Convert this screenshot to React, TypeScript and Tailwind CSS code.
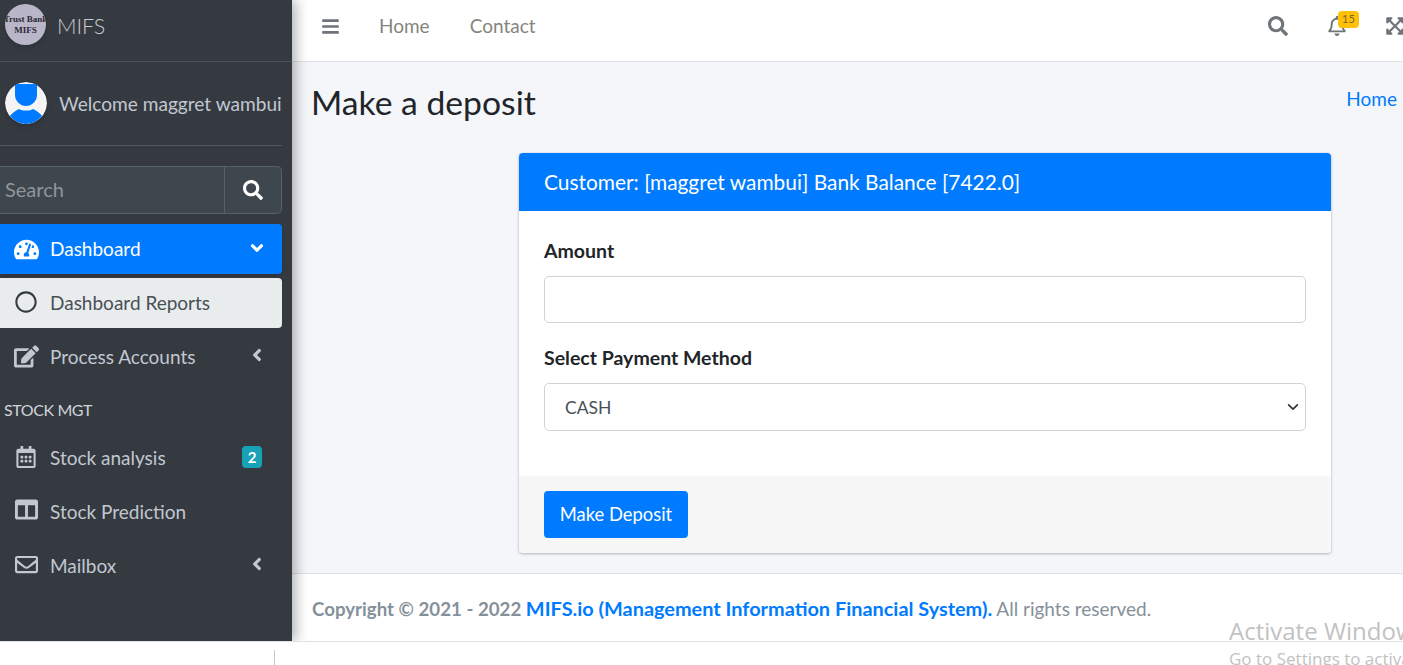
import React from 'react';
import {
  FaAngleDown,
  FaAngleLeft,
  FaBars,
  FaColumns,
  FaEdit,
  FaExpandArrowsAlt,
  FaRegBell,
  FaRegCalendarAlt,
  FaRegCircle,
  FaRegEnvelope,
  FaSearch,
  FaTachometerAlt,
} from 'react-icons/fa';

const NavRow = ({ icon, label, right }: { icon: React.ReactNode; label: string; right?: React.ReactNode }) => (
  <a className="flex h-[50px] items-center rounded-[4px] text-[#c2c7d0]">
    <span className="flex w-[50px] shrink-0 justify-center pl-[2px]">{icon}</span>
    <span>{label}</span>
    <span className="ml-auto">{right}</span>
  </a>
);

const App: React.FC = () => {
  return (
    <div className="relative h-[665px] w-[1403px] overflow-hidden bg-white font-['Lato',sans-serif] text-[19px] text-[#212529]">
      <div className="flex h-[642px] overflow-hidden border-b border-[#dee2e6]">
        <aside className="z-10 flex w-[292px] shrink-0 flex-col bg-[#343a40] shadow-[4px_0_12px_rgba(0,0,0,0.3)]">
          <div className="flex h-[62px] shrink-0 items-start border-b border-[#4b545c] pl-[5px] pt-[4px]">
            <div className="flex h-[41px] w-[41px] flex-col items-center justify-center overflow-hidden rounded-full bg-[#b9b6c9] font-['Liberation_Serif',serif] text-[9px] font-bold leading-[11px] text-[#2b2b33] shadow-md">
              <span className="whitespace-nowrap">Trust Bank</span>
              <span>MIFS</span>
            </div>
            <span className="ml-[11px] mt-[7px] text-[21.5px] font-light leading-[30px] text-[#c8ccd2]">MIFS</span>
          </div>

          <div className="mr-[10px] flex h-[84px] shrink-0 items-center border-b border-[#4f5962] pl-[5px]">
            <svg viewBox="0 0 42 42" className="mb-[2px] h-[42px] w-[42px] shrink-0 rounded-full shadow-md">
              <circle cx="21" cy="21" r="21" fill="#f4f4f4" />
              <path d="M10 2h22v11c0 6-5 11-11 11S10 19 10 13z" fill="#007bff" />
              <path d="M5 34c2-3 5-5 9-7 3 2 11 2 14 0 4 2 7 4 9 7-4 5-10 8-16 8S9 39 5 34z" fill="#007bff" />
            </svg>
            <span className="ml-[12px] whitespace-nowrap pt-[2px] text-[19.1px] text-[#c2c7d0]">Welcome maggret wambui</span>
          </div>

          <div className="mr-[10px] mt-[20px] flex h-[48px] shrink-0 rounded-r-[5px] border border-l-0 border-[#56606a] bg-[#3f474e]">
            <div className="flex flex-1 items-center pb-[2px] pl-[5px] text-[20px] text-[#8f969c]">Search</div>
            <div className="flex w-[57px] items-center justify-center border-l border-[#56606a]">
              <FaSearch className="text-[20px] text-white" />
            </div>
          </div>

          <nav className="mr-[10px] mt-[10px] flex flex-col">
            <a className="flex h-[50px] items-center rounded-r-[4px] bg-[#007bff] text-white shadow-md">
              <span className="flex w-[50px] shrink-0 justify-center pl-[2px]">
                <FaTachometerAlt className="text-[25px]" />
              </span>
              <span>Dashboard</span>
              <FaAngleDown className="mb-[2px] ml-auto mr-[15px] text-[20px]" />
            </a>
            <a className="mt-[4px] flex h-[50px] items-center rounded-r-[4px] bg-[#e9ecec] text-[#495057]">
              <span className="flex w-[50px] shrink-0 justify-center pl-[2px]">
                <FaRegCircle className="mb-[2px] text-[22px] text-[#343a40]" />
              </span>
              <span>Dashboard Reports</span>
            </a>
            <div className="mt-[4px]">
              <NavRow
                icon={<FaEdit className="mb-[2px] text-[25px]" />}
                label="Process Accounts"
                right={<FaAngleLeft className="mb-[5px] mr-[15px] text-[20px]" />}
              />
            </div>
            <div className="mt-[14px] h-[28px] pl-[4px] text-[16px] leading-[28px] tracking-[-0.4px] text-[#d0d4db]">STOCK MGT</div>
            <div className="mt-[9px] flex flex-col gap-[4px]">
              <NavRow
                icon={<FaRegCalendarAlt className="mb-[2px] text-[22px]" />}
                label="Stock analysis"
                right={
                  <span className="mb-[2px] mr-[20px] flex h-[22px] w-[20px] items-center justify-center rounded-[4px] bg-[#17a2b8] text-[15px] font-bold text-white">
                    2
                  </span>
                }
              />
              <NavRow icon={<FaColumns className="mb-[5px] text-[23px]" />} label="Stock Prediction" />
              <NavRow
                icon={<FaRegEnvelope className="mb-[4px] text-[23px]" />}
                label="Mailbox"
                right={<FaAngleLeft className="mb-[5px] mr-[15px] text-[20px]" />}
              />
            </div>
          </nav>
        </aside>

        <div className="flex min-w-0 flex-1 flex-col">
          <header className="flex h-[62px] shrink-0 items-center border-b border-[#dee2e6] bg-white pb-[9px] text-[#85857d]">
            <FaBars className="ml-[29px] text-[19px] text-[#6f7479]" />
            <span className="ml-[39px]">Home</span>
            <span className="ml-[40px]">Contact</span>
            <div className="ml-auto flex items-center">
              <FaSearch className="text-[20px] text-[#6f7479]" />
              <div className="relative ml-[39px]">
                <FaRegBell className="text-[20px] text-[#6f7479]" />
                <span className="absolute left-[11px] top-[-5px] flex h-[17px] w-[21px] items-center justify-center rounded-[4px] bg-[#ffc107] text-[11px] text-[#7a6520]">
                  15
                </span>
              </div>
              <FaExpandArrowsAlt className="ml-[38px] mr-[-2px] text-[20px] text-[#6f7479]" />
            </div>
          </header>

          <main className="flex flex-1 flex-col bg-[#f4f6f9]">
            <div className="flex h-[91px] items-start justify-between pl-[19px] pr-[6px] pt-[17px]">
              <h1 className="text-[33.7px] leading-[46px] text-[#212529]">Make a deposit</h1>
              <a className="mt-[6px] text-[#007bff]">Home</a>
            </div>
            <section className="ml-[227px] w-[812px] overflow-hidden rounded-[4px] bg-white shadow-[0_0_1px_rgba(0,0,0,0.2),0_1px_3px_rgba(0,0,0,0.25)]">
              <div className="flex h-[58px] items-center bg-[#007bff] px-[25px] text-[20.9px] text-white">
                Customer: [maggret wambui] Bank Balance [7422.0]
              </div>
              <div className="h-[265px] px-[25px] pt-[25px]">
                <label className="block text-[19.5px] font-bold leading-[30px]">Amount</label>
                <div className="mt-[10px] h-[47px] rounded-[5px] border border-[#ced4da] bg-white" />
                <label className="mt-[20px] block text-[19.5px] font-bold leading-[30px]">Select Payment Method</label>
                <div className="mt-[10px] flex h-[48px] items-center justify-between rounded-[5px] border border-[#ced4da] bg-white pl-[20px] pr-[5px] text-[17.5px] text-[#495057]">
                  <span className="pt-[2px]">CASH</span>
                  <svg viewBox="0 0 16 16" className="h-[14px] w-[14px]">
                    <path d="M3 5.5l5 5 5-5" fill="none" stroke="#343a40" strokeWidth="2" strokeLinecap="round" strokeLinejoin="round" />
                  </svg>
                </div>
              </div>
              <div className="flex h-[77px] items-center bg-[#f7f7f7] px-[25px]">
                <button className="h-[47px] w-[144px] rounded-[4px] bg-[#007bff] text-[18.4px] text-white">Make Deposit</button>
              </div>
            </section>
            <div className="flex-1" />
          </main>

          <footer className="flex h-[68px] shrink-0 items-center border-t border-[#dee2e6] bg-white pl-[20px] pt-[2px] text-[#869099]">
            <span className="whitespace-nowrap">
              <strong className="text-[18.7px]">Copyright © 2021 - 2022 </strong>
              <strong className="text-[19.9px] text-[#007bff]">MIFS.io (Management Information Financial System).</strong> All rights reserved.
            </span>
          </footer>
        </div>
      </div>

      <div className="ml-[274px] mt-[8px] h-[15px] w-px bg-[#c8c8c8]" />

      <div className="absolute left-[1229px] top-[615px] whitespace-nowrap font-['Open_Sans',sans-serif] text-[#c2c2c2]">
        <div className="text-[24px] leading-[32px]">Activate Windows</div>
        <div className="text-[17px] leading-[24px]">Go to Settings to activate Windows.</div>
      </div>
    </div>
  );
};

export default App;
